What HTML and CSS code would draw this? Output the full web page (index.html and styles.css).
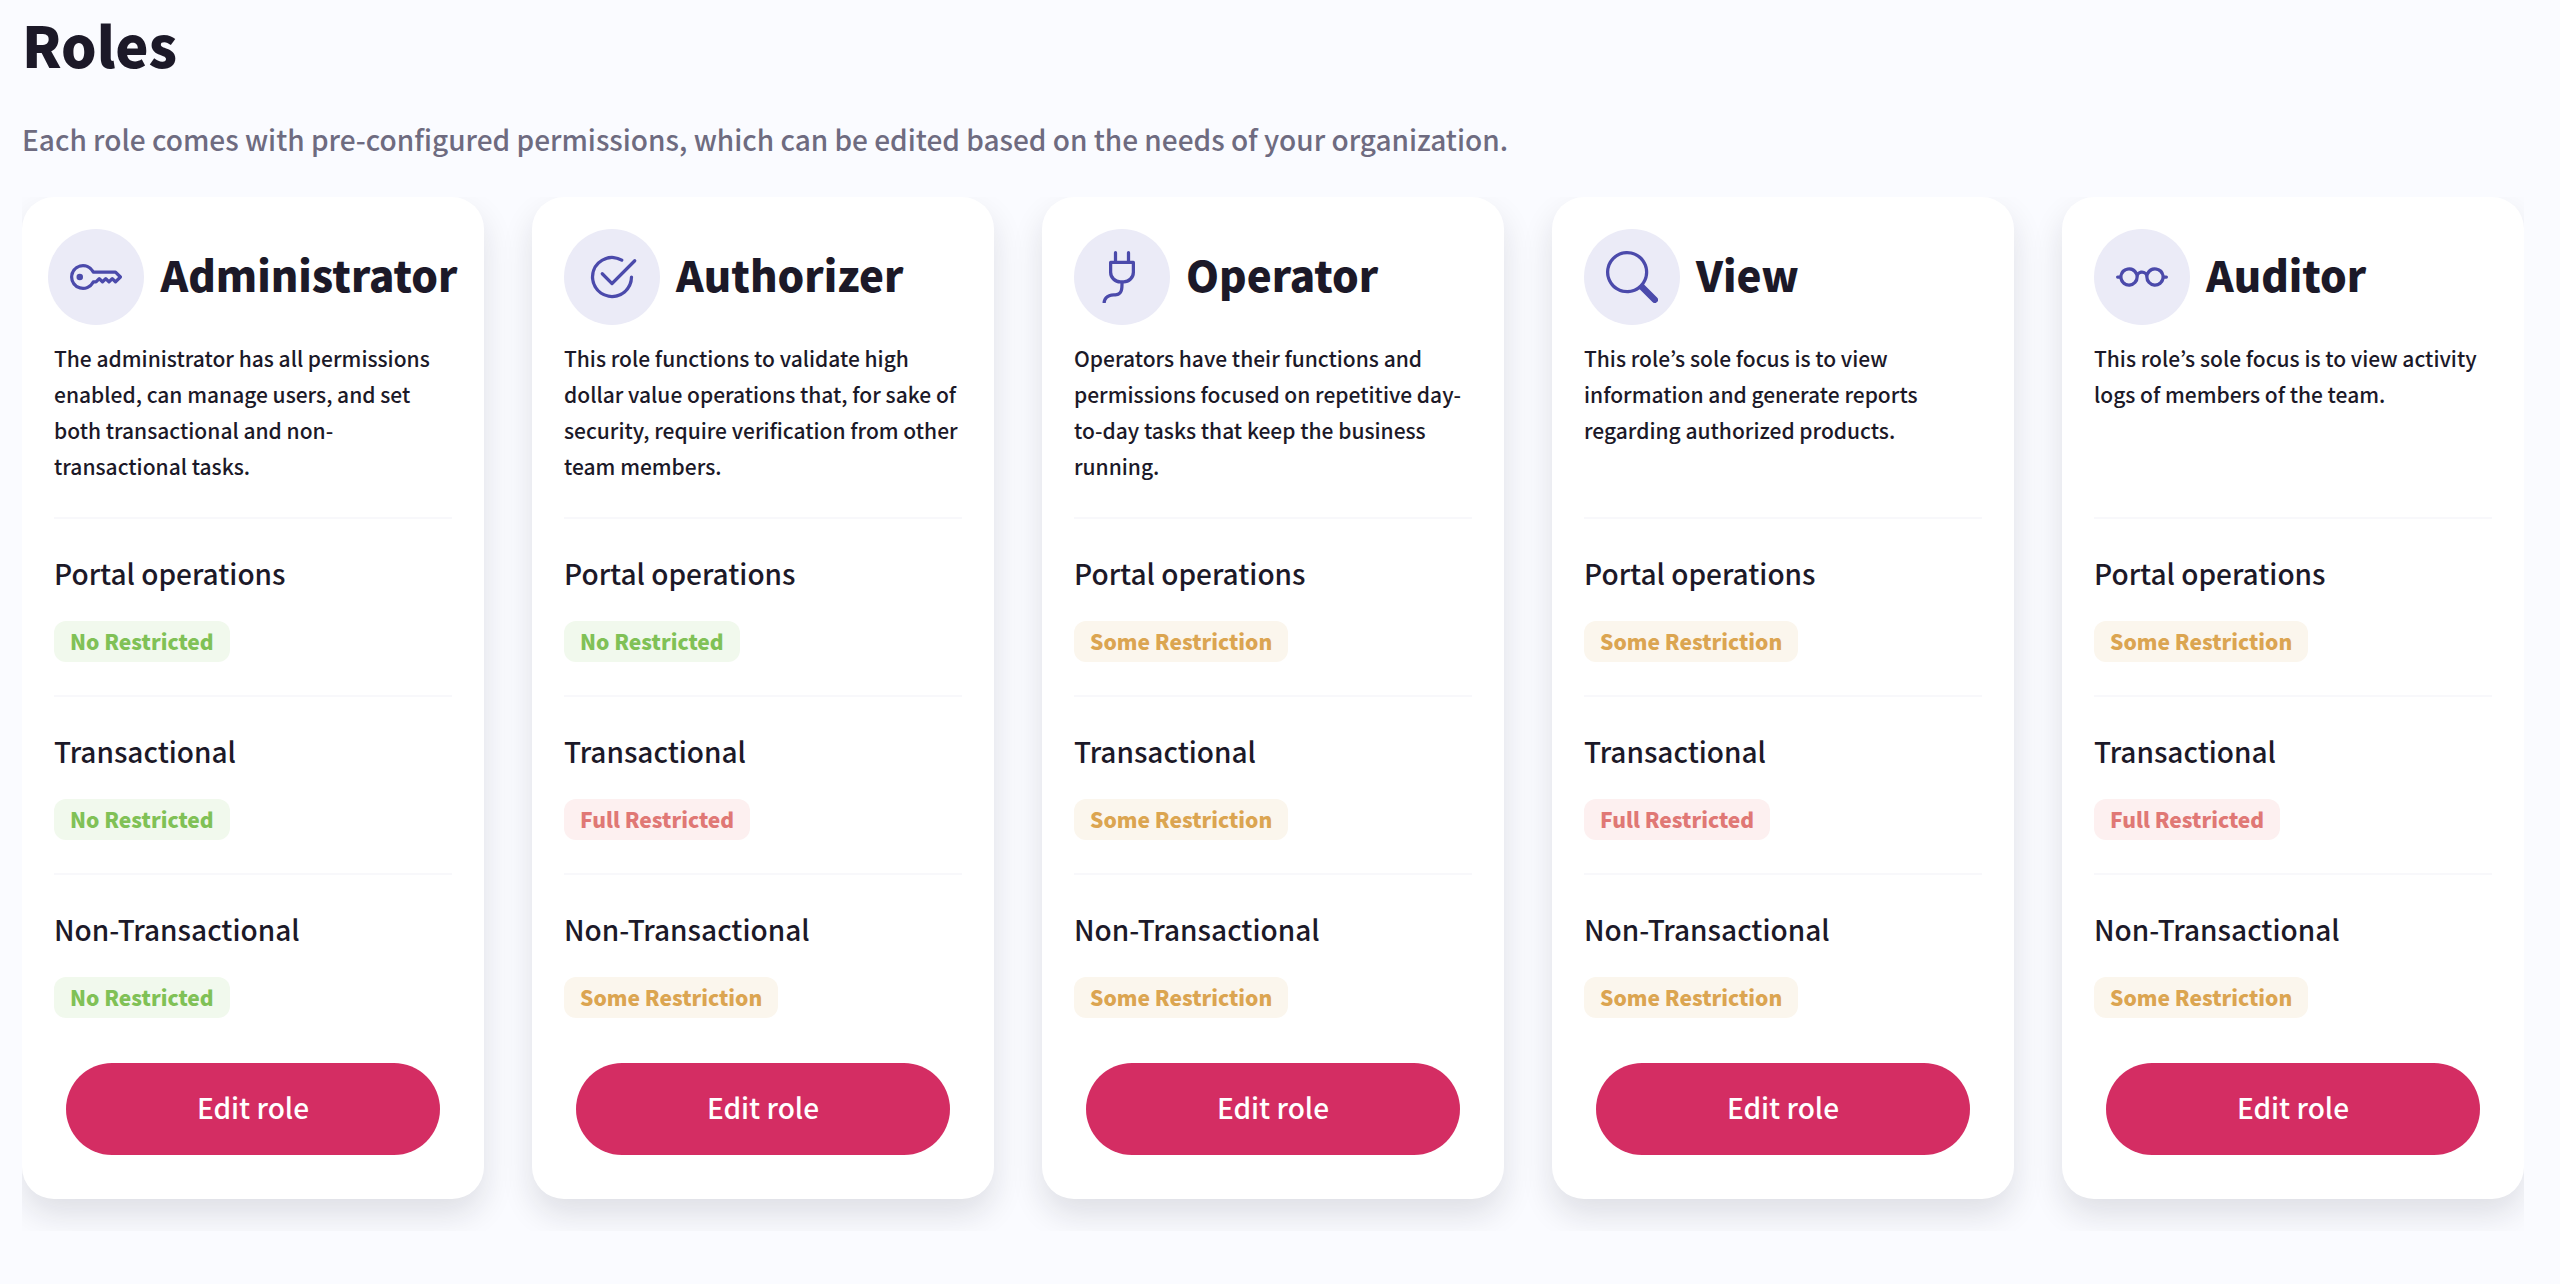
FILE: index.html
```html
<!DOCTYPE html>
<html lang="en">
<head>
<meta charset="utf-8">
<meta name="viewport" content="width=device-width, initial-scale=1">
<title>Roles</title>
<link rel="stylesheet" href="styles.css">
</head>
<body>
<main class="page">
  <h1 class="page-title">Roles</h1>
  <p class="page-intro">Each role comes with pre-configured permissions, which can be edited based on the needs of your organization.</p>
  <div class="roles">
    <article class="card">
      <header class="card-head">
        <span class="badge-icon"><svg class="icon" viewBox="0 0 16 16" aria-hidden="true"><path d="M0 8a4 4 0 0 1 7.465-2H14a.5.5 0 0 1 .354.146l1.5 1.5a.5.5 0 0 1 0 .708l-1.5 1.5a.5.5 0 0 1-.708 0L13 9.207l-.646.647a.5.5 0 0 1-.708 0L11 9.207l-.646.647a.5.5 0 0 1-.708 0L9 9.207l-.646.647A.5.5 0 0 1 8 10h-.535A4 4 0 0 1 0 8m4-3a3 3 0 1 0 2.712 4.285A.5.5 0 0 1 7.163 9h.63l.853-.854a.5.5 0 0 1 .708 0l.646.647.646-.647a.5.5 0 0 1 .708 0l.646.647.646-.647a.5.5 0 0 1 .708 0l.646.647.793-.793-1-1h-6.63a.5.5 0 0 1-.451-.285A3 3 0 0 0 4 5"/><path d="M4 8a1 1 0 1 1-2 0 1 1 0 0 1 2 0"/></svg></span>
        <h2 class="card-title">Administrator</h2>
      </header>
      <p class="card-text">The administrator has all permissions enabled, can manage users, and set both transactional and non-transactional tasks.</p>
      <section class="scope"><h3 class="scope-name">Portal operations</h3><span class="tag tag-none">No Restricted</span></section>
      <section class="scope"><h3 class="scope-name">Transactional</h3><span class="tag tag-none">No Restricted</span></section>
      <section class="scope"><h3 class="scope-name">Non-Transactional</h3><span class="tag tag-none">No Restricted</span></section>
      <button class="edit" type="button">Edit role</button>
    </article>
    <article class="card">
      <header class="card-head">
        <span class="badge-icon"><svg class="icon" viewBox="0 0 16 16" aria-hidden="true"><path d="M2.5 8a5.5 5.5 0 0 1 8.25-4.764.5.5 0 0 0 .5-.866A6.5 6.5 0 1 0 14.5 8a.5.5 0 0 0-1 0 5.5 5.5 0 1 1-11 0"/><path d="M15.354 3.354a.5.5 0 0 0-.708-.708L8 9.293 5.354 6.646a.5.5 0 1 0-.708.708l3 3a.5.5 0 0 0 .708 0z"/></svg></span>
        <h2 class="card-title">Authorizer</h2>
      </header>
      <p class="card-text">This role functions to validate high dollar value operations that, for sake of security, require verification from other team members.</p>
      <section class="scope"><h3 class="scope-name">Portal operations</h3><span class="tag tag-none">No Restricted</span></section>
      <section class="scope"><h3 class="scope-name">Transactional</h3><span class="tag tag-full">Full Restricted</span></section>
      <section class="scope"><h3 class="scope-name">Non-Transactional</h3><span class="tag tag-some">Some Restriction</span></section>
      <button class="edit" type="button">Edit role</button>
    </article>
    <article class="card">
      <header class="card-head">
        <span class="badge-icon"><svg class="icon" viewBox="0 0 16 16" aria-hidden="true"><path d="M6 0a.5.5 0 0 1 .5.5V3h3V.5a.5.5 0 0 1 1 0V3h1a.5.5 0 0 1 .5.5v3A3.5 3.5 0 0 1 8.5 10c-.002.434-.01.845-.04 1.22-.041.514-.126 1.003-.317 1.424a2.08 2.08 0 0 1-.97 1.028C6.725 13.9 6.169 14 5.5 14c-.998 0-1.61.33-1.974.718A1.92 1.92 0 0 0 3 16H2c0-.616.232-1.367.797-1.968C3.374 13.42 4.261 13 5.5 13c.581 0 .962-.088 1.218-.219.241-.123.4-.3.514-.55.121-.266.193-.621.23-1.09.027-.34.035-.718.037-1.141A3.5 3.5 0 0 1 4 6.5v-3a.5.5 0 0 1 .5-.5h1V.5A.5.5 0 0 1 6 0M5 4v2.5A2.5 2.5 0 0 0 7.5 9h1A2.5 2.5 0 0 0 11 6.5V4z"/></svg></span>
        <h2 class="card-title">Operator</h2>
      </header>
      <p class="card-text">Operators have their functions and permissions focused on repetitive day-to-day tasks that keep the business running.</p>
      <section class="scope"><h3 class="scope-name">Portal operations</h3><span class="tag tag-some">Some Restriction</span></section>
      <section class="scope"><h3 class="scope-name">Transactional</h3><span class="tag tag-some">Some Restriction</span></section>
      <section class="scope"><h3 class="scope-name">Non-Transactional</h3><span class="tag tag-some">Some Restriction</span></section>
      <button class="edit" type="button">Edit role</button>
    </article>
    <article class="card">
      <header class="card-head">
        <span class="badge-icon"><svg class="icon" viewBox="0 0 16 16" aria-hidden="true"><path d="M11.742 10.344a6.5 6.5 0 1 0-1.397 1.398h-.001q.044.06.098.115l3.85 3.85a1 1 0 0 0 1.415-1.414l-3.85-3.85a1 1 0 0 0-.115-.1zM12 6.5a5.5 5.5 0 1 1-11 0 5.5 5.5 0 0 1 11 0"/></svg></span>
        <h2 class="card-title">View</h2>
      </header>
      <p class="card-text">This role’s sole focus is to view information and generate reports regarding authorized products.</p>
      <section class="scope"><h3 class="scope-name">Portal operations</h3><span class="tag tag-some">Some Restriction</span></section>
      <section class="scope"><h3 class="scope-name">Transactional</h3><span class="tag tag-full">Full Restricted</span></section>
      <section class="scope"><h3 class="scope-name">Non-Transactional</h3><span class="tag tag-some">Some Restriction</span></section>
      <button class="edit" type="button">Edit role</button>
    </article>
    <article class="card">
      <header class="card-head">
        <span class="badge-icon"><svg class="icon" viewBox="0 0 16 16" aria-hidden="true"><path d="M4 6a2 2 0 1 1 0 4 2 2 0 0 1 0-4m2.625.547a3 3 0 0 0-5.584.953H.5a.5.5 0 0 0 0 1h.541A3 3 0 0 0 7 8a1 1 0 0 1 2 0 3 3 0 0 0 5.959.5h.541a.5.5 0 0 0 0-1h-.541a3 3 0 0 0-5.584-.953A2 2 0 0 0 8 6c-.532 0-1.016.208-1.375.547M14 8a2 2 0 1 1-4 0 2 2 0 0 1 4 0"/></svg></span>
        <h2 class="card-title">Auditor</h2>
      </header>
      <p class="card-text">This role’s sole focus is to view activity logs of members of the team.</p>
      <section class="scope"><h3 class="scope-name">Portal operations</h3><span class="tag tag-some">Some Restriction</span></section>
      <section class="scope"><h3 class="scope-name">Transactional</h3><span class="tag tag-full">Full Restricted</span></section>
      <section class="scope"><h3 class="scope-name">Non-Transactional</h3><span class="tag tag-some">Some Restriction</span></section>
      <button class="edit" type="button">Edit role</button>
    </article>
  </div>
</main>
</body>
</html>
```
FILE: styles.css
```css
* {
  box-sizing: border-box;
}

body {
  margin: 0;
  background: #fafbff;
  color: #1c1928;
  font-family: "Noto Sans CJK KR", "Noto Sans", sans-serif;
  font-weight: 500;
}

h1, h2, h3, p {
  margin: 0;
}

.page {
  padding: 4px 36px 32px 22px;
}

.page-title {
  font-size: 56px;
  line-height: 80px;
  font-weight: 900;
}

.page-intro {
  margin-top: 31px;
  margin-bottom: 34px;
  color: #6e6b80;
  font-size: 28px;
  line-height: 48px;
}

/* Clips the card shadows at the outer edges of the row */
.roles {
  display: grid;
  grid-template-columns: repeat(5, minmax(0, 1fr));
  gap: 48px;
  padding-bottom: 32px;
  overflow: hidden;
}

.card {
  display: flex;
  flex-direction: column;
  padding: 32px 32px 44px;
  border-radius: 32px;
  background: #fff;
  box-shadow: 0 16px 32px rgba(28, 25, 40, 0.12);
}

/* A title wider than the card column spills evenly to both sides */
.card-head {
  display: flex;
  align-items: center;
  align-self: center;
  gap: 16px;
  width: max-content;
  min-width: 100%;
}

.badge-icon {
  display: flex;
  flex: none;
  align-items: center;
  justify-content: center;
  width: 96px;
  height: 96px;
  border-radius: 50%;
  background: #ebebf7;
}

.icon {
  width: 52px;
  height: 52px;
  fill: #4b4aab;
}

.card-title {
  padding-bottom: 6px;
  font-size: 42px;
  line-height: 64px;
  font-weight: 900;
}

.card-text {
  min-height: 144px;
  margin: 15px 0 33px;
  font-size: 21px;
  line-height: 36px;
}

.scope {
  padding: 30px 0 33px;
  border-top: 2px solid #f8f8fb;
}

.scope-name {
  margin-bottom: 24px;
  font-size: 28px;
  line-height: 48px;
  font-weight: 500;
}

.tag {
  display: block;
  width: max-content;
  padding: 0 16px 1px;
  border-radius: 12px;
  font-size: 21px;
  line-height: 40px;
  font-weight: 900;
}

.tag-none {
  background: #f1f9ed;
  color: #80c156;
}

.tag-some {
  background: #fbf6ed;
  color: #dba551;
}

.tag-full {
  background: #fdf0f0;
  color: #e07875;
}

.edit {
  height: 92px;
  margin: 12px 12px 0;
  padding: 0 0 4px;
  border: 0;
  border-radius: 46px;
  background: #d42d63;
  color: #fff;
  font-family: inherit;
  font-size: 28px;
  font-weight: 500;
  cursor: pointer;
}
```
